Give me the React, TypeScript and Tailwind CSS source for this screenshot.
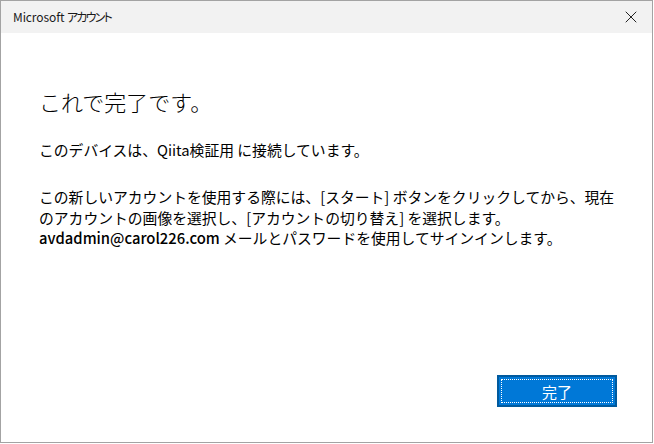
import { X } from "lucide-react";

const FONT = "font-['Segoe_UI','Noto_Sans_CJK_JP',sans-serif]";

export default function App() {
  return (
    <div className={`h-[444px] w-[654px] bg-white ${FONT} text-black`}>
      <div className="flex h-[443px] w-[653px] flex-col border border-[#a3a3a3]">
        <div className="flex h-[32px] shrink-0 items-center justify-between bg-[#f2f2f2] pl-[12px] pr-[11px]">
          <span className="text-[12px] leading-none tracking-[-0.1px] text-[#1a1a1a]">
            Microsoft{" "}
            <span className="tracking-[-1.8px] [font-feature-settings:'palt']">アカウント</span>
          </span>
          <X className="size-[20px] text-[#222]" strokeWidth={1.2} aria-hidden="true" />
        </div>

        <div className="flex flex-1 flex-col pl-[38px] pr-[35px] pb-[35px]">
          <h1 className="mt-[53px] text-[22px] font-light leading-[30px]">これで完了です。</h1>

          <p className="mt-[23px] text-[14.8px] leading-[21px]">
            このデバイスは、Qiita検証用 に接続しています。
          </p>

          <p className="mt-[27px] text-[14.8px] leading-[20.5px]">
            この新しいアカウントを使用する際には、[スタート] ボタンをクリックしてから、現在
            <br />
            のアカウントの画像を選択し、[アカウントの切り替え] を選択します。
            <br />
            <span className="font-medium">avdadmin@carol226.com</span> メールとパスワードを使用してサインインします。
          </p>

          <div className="mt-auto flex justify-end">
            <button
              type="button"
              className="h-[32px] w-[120px] border-2 border-[#005a9e] bg-[#0078d7] p-[2px] text-white"
            >
              <span className="flex h-full w-full items-center justify-center border border-dotted border-white text-[15px] leading-none">
                完了
              </span>
            </button>
          </div>
        </div>
      </div>
    </div>
  );
}
